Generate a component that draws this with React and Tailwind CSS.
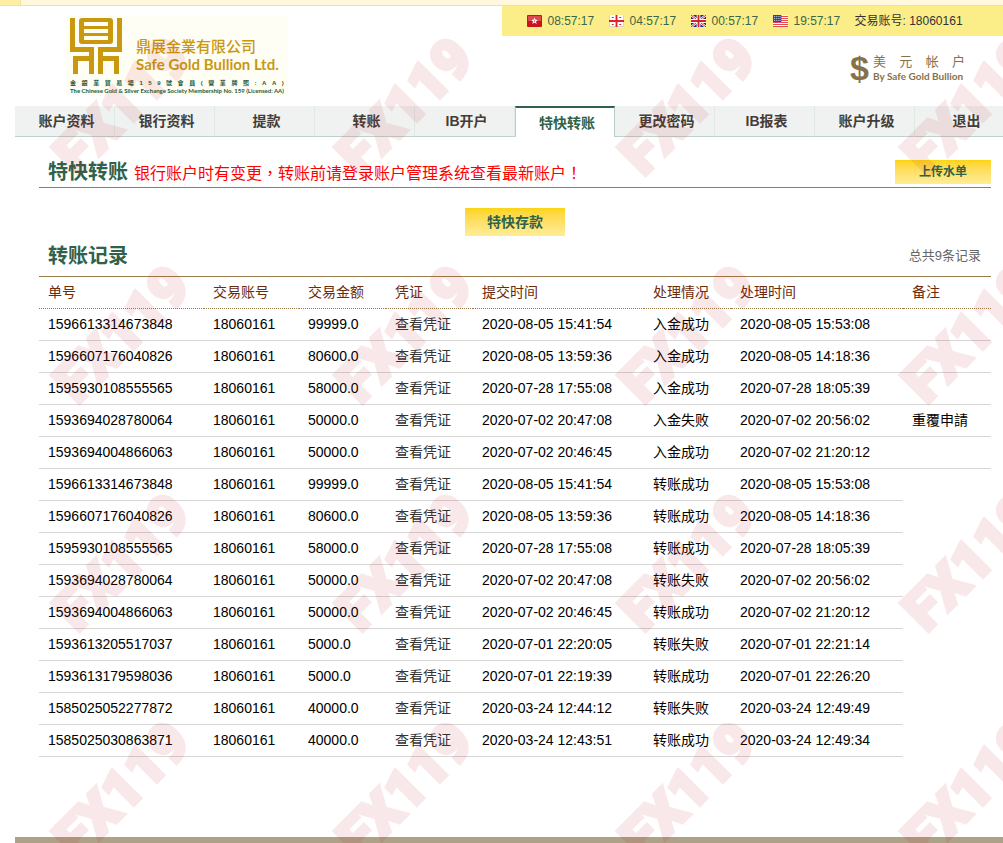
import React from "react";

const clocks = [
  ["hk", "08:57:17", "香港"],
  ["ge", "04:57:17", "格鲁吉亚"],
  ["gb", "00:57:17", "英国"],
  ["us", "19:57:17", "美国"],
];

const tabs = ["账户资料", "银行资料", "提款", "转账", "IB开户", "特快转账", "更改密码", "IB报表", "账户升级", "退出"];

const headers = ["单号", "交易账号", "交易金额", "凭证", "提交时间", "处理情况", "处理时间", "备注"];

const rows = [
  ["1596613314673848", "99999.0", "2020-08-05 15:41:54", "入金成功", "2020-08-05 15:53:08", ""],
  ["1596607176040826", "80600.0", "2020-08-05 13:59:36", "入金成功", "2020-08-05 14:18:36", ""],
  ["1595930108555565", "58000.0", "2020-07-28 17:55:08", "入金成功", "2020-07-28 18:05:39", ""],
  ["1593694028780064", "50000.0", "2020-07-02 20:47:08", "入金失败", "2020-07-02 20:56:02", "重覆申請"],
  ["1593694004866063", "50000.0", "2020-07-02 20:46:45", "入金成功", "2020-07-02 21:20:12", ""],
  ["1596613314673848", "99999.0", "2020-08-05 15:41:54", "转账成功", "2020-08-05 15:53:08"],
  ["1596607176040826", "80600.0", "2020-08-05 13:59:36", "转账成功", "2020-08-05 14:18:36"],
  ["1595930108555565", "58000.0", "2020-07-28 17:55:08", "转账成功", "2020-07-28 18:05:39"],
  ["1593694028780064", "50000.0", "2020-07-02 20:47:08", "转账失败", "2020-07-02 20:56:02"],
  ["1593694004866063", "50000.0", "2020-07-02 20:46:45", "转账成功", "2020-07-02 21:20:12"],
  ["1593613205517037", "5000.0", "2020-07-01 22:20:05", "转账失败", "2020-07-01 22:21:14"],
  ["1593613179598036", "5000.0", "2020-07-01 22:19:39", "转账成功", "2020-07-01 22:26:20"],
  ["1585025052277872", "40000.0", "2020-03-24 12:44:12", "转账失败", "2020-03-24 12:49:49"],
  ["1585025030863871", "40000.0", "2020-03-24 12:43:51", "转账成功", "2020-03-24 12:49:34"],
];

function Flag({ code }) {
  return (
    <svg width="15" height="12" viewBox="0 0 16 12" preserveAspectRatio="none" aria-hidden="true" className="shrink-0">
      {code === "hk" && (
        <>
          <rect width="16" height="12" rx="1" fill="#c8141c" />
          <rect x="1" y="1" width="14" height="5" fill="#e04a4e" />
          <path d="M8 2.5l1 2.3 2.5.1-1.9 1.6.7 2.5L8 7.6 5.7 9l.7-2.5L4.5 4.9 7 4.8z" fill="#fff" />
          <circle cx="8" cy="6" r=".7" fill="#d8303a" />
        </>
      )}
      {code === "ge" && (
        <>
          <rect width="16" height="12" rx="1" fill="#d9d3cd" />
          <rect x="1" y="0" width="14" height="11" fill="#fff" />
          <path d="M7 0h2v12H7zM0 5h16v2H0z" fill="#e0202c" />
          <path d="M3 2h2v1H3zM11 2h2v1h-2zM3 9h2v1H3zM11 9h2v1h-2z" fill="#e0202c" />
        </>
      )}
      {code === "gb" && (
        <>
          <rect width="16" height="12" rx="1" fill="#1d2f75" />
          <path d="M0 0l16 12M16 0L0 12" stroke="#fff" strokeWidth="2.4" />
          <path d="M0 0l16 12M16 0L0 12" stroke="#d8202c" strokeWidth="1" />
          <path d="M8 0v12M0 6h16" stroke="#fff" strokeWidth="4" />
          <path d="M8 0v12M0 6h16" stroke="#d8202c" strokeWidth="2" />
        </>
      )}
      {code === "us" && (
        <>
          <rect width="16" height="12" rx="1" fill="#fff" />
          <path d="M0 1.500h16M0 3.500h16M0 5.500h16M0 7.500h16M0 9.500h16M0 11.500h16" stroke="#e0444c" strokeWidth="1" />
          <rect width="9" height="7" fill="#3a3f94" />
          <path d="M1 1.500h8M1 3.500h8M1 5.500h8" stroke="#c9cbe6" strokeWidth="1" strokeDasharray="1 1" />
        </>
      )}
    </svg>
  );
}

function Logo() {
  return (
    <a href="#home" className="flex h-[79px] w-[222px] flex-col bg-[#fffef5] pt-0.5 pl-1">
      <span className="flex gap-3.5">
        <svg width="52" height="58" viewBox="0 0 52 58" aria-hidden="true" className="shrink-0" fill="#c9980f">
          <path d="M0 0h5v29h19v27h-5V43H8v13H3V38h16v-4H0z" />
          <path d="M52 0h-5v29H28v27h5V43h11v13h5V38H33v-4h19z" />
          <path fillRule="evenodd" d="M12 0h28a3 3 0 0 1 3 3v20a3 3 0 0 1-3 3H12a3 3 0 0 1-3-3V3a3 3 0 0 1 3-3zM14 4v4h24V4zM14 11v4h24v-4zM14 18v4h24v-4z" />
        </svg>
        <span className="flex flex-col pt-5 text-[#c9980f]">
          <span className="text-[15px] leading-[18px] font-medium whitespace-nowrap">鼎展金業有限公司</span>
          <span className="font-['Lato'] text-[15px] leading-4 font-bold whitespace-nowrap">Safe Gold Bullion Ltd.</span>
        </span>
      </span>
      <span className="mt-1 flex w-[214px] justify-between text-[6px] leading-[7px] font-bold text-[#1e5a3c]">
        {Array.from("金銀業貿易場159號會員(營業牌照:AA)").map((c, i) => (
          <span key={i}>{c}</span>
        ))}
      </span>
      <span className="font-['Lato'] text-[6px] leading-[7px] font-bold whitespace-nowrap text-[#1e5a3c]">
        The Chinese Gold &amp; Silver Exchange Society Membership No. 159 (Licensed: AA)
      </span>
    </a>
  );
}

function Watermark() {
  return (
    <div aria-hidden="true" className="pointer-events-none absolute inset-0 overflow-hidden opacity-9 select-none">
      <div className="-mt-2 -ml-5 grid w-[1132px] grid-cols-4">
        {Array.from({ length: 16 }, (_, i) => (
          <div key={i} className="flex h-[228px] items-center justify-center">
            <span className="-rotate-45 font-['Roboto'] text-[56px] leading-none font-black text-[#c8141c] [-webkit-text-stroke:4px_#c8141c]">FX119</span>
          </div>
        ))}
      </div>
    </div>
  );
}

export default function App() {
  return (
    <div className="relative flex min-h-screen flex-col overflow-hidden bg-white font-['Liberation_Sans','Noto_Sans_CJK_SC',sans-serif] text-sm text-black">
      <div className="flex h-1.5 border-b border-[#f5dfa0] bg-[#fff8dc]">
        <div className="w-[21px] border-r border-[#f5dfa0] bg-[#feefa5]" />
      </div>

      <header className="grid h-[100px] grid-cols-2">
        <div className="pt-2.5 pl-[66px]">
          <Logo />
        </div>
        <div className="flex flex-col">
          <div className="flex h-[30px] items-center bg-[#fbed88] pl-[25px] text-xs text-[#3d6647]">
            {clocks.map(([code, time, label]) => (
              <span key={code} aria-label={label} className="flex w-[82px] shrink-0 items-center gap-1.5">
                <Flag code={code} />
                {time}
              </span>
            ))}
            <span className="whitespace-nowrap text-[#333]">交易账号: 18060161</span>
          </div>
          <div className="flex items-center justify-end gap-1 pt-3 pr-[38px] text-[#86724a]">
            <span className="text-[34px] leading-10 font-bold">$</span>
            <span className="flex w-[92px] flex-col">
              <span className="flex justify-between text-[13px] leading-4">
                <span>美</span>
                <span>元</span>
                <span>帐</span>
                <span>户</span>
              </span>
              <span className="font-['Lato'] text-[10px] leading-3 font-bold whitespace-nowrap">By Safe Gold Bullion</span>
            </span>
          </div>
        </div>
      </header>

      <nav className="ml-[15px] flex h-[31px] font-bold">
        {tabs.map((t) =>
          t === "特快转账" ? (
            <a key={t} href="#express" aria-current="page" className="flex w-[100px] shrink-0 items-center justify-center border-x border-t-2 border-[#b9cfc6] border-t-[#2f6248] pl-1 text-[#2f6248]">
              {t}
            </a>
          ) : (
            <a key={t} href="#tab" className="flex w-[100px] shrink-0 items-center justify-center border-r border-b border-r-[#e0e9e6] border-b-[#bdd1ca] bg-[#eff2f1] pl-1 text-[#443c36]">
              {t}
            </a>
          )
        )}
      </nav>

      <main className="flex grow flex-col pr-3 pl-[39px]">
        <div className="flex h-[51px] items-end justify-between border-b border-[#9a7b50] pb-[3px] pl-[9px]">
          <div className="flex items-center gap-1.5">
            <h1 className="text-xl leading-6 font-bold text-[#2f6248]">特快转账</h1>
            <p className="font-['Noto_Sans_CJK_TC',sans-serif] text-base leading-6 text-[#f00]">银行账户时有变更，转账前请登录账户管理系统查看最新账户！</p>
          </div>
          <button type="button" className="h-6 w-24 bg-linear-to-b from-[#fdd40a] to-[#ffec96] text-xs font-bold text-[#2f6248]">
            上传水单
          </button>
        </div>

        <div className="flex justify-center pt-5">
          <button type="button" className="h-7 w-[100px] bg-linear-to-b from-[#fdd40a] to-[#ffec96] text-sm font-bold text-[#2f6248]">
            特快存款
          </button>
        </div>

        <div className="flex h-10 items-center justify-between pr-2.5 pl-[9px]">
          <h2 className="text-xl leading-6 font-bold text-[#2f6248]">转账记录</h2>
          <span className="text-[13px] leading-6 text-[#666]">总共9条记录</span>
        </div>

        <table className="w-full table-fixed border-separate border-spacing-0 border-t border-[#9a7b50] text-left">
          <colgroup>
            <col className="w-[165px]" />
            <col className="w-[95px]" />
            <col className="w-[87px]" />
            <col className="w-[87px]" />
            <col className="w-[171px]" />
            <col className="w-[87px]" />
            <col className="w-[172px]" />
            <col />
          </colgroup>
          <thead>
            <tr>
              {headers.map((h) => (
                <th key={h} className="h-8 border-b border-dotted border-[#9a7b50] pb-0.5 pl-[9px] font-normal text-[#6e2a08]">
                  {h}
                </th>
              ))}
            </tr>
          </thead>
          <tbody>
            {rows.map(([id, amount, sent, state, done, note], i) => (
              <tr key={i} className="[&>td]:h-8 [&>td]:border-b [&>td]:border-[#d6d6d6] [&>td]:pb-0.5 [&>td]:pl-[9px] [&>td]:whitespace-nowrap">
                <td>{id}</td>
                <td>18060161</td>
                <td>{amount}</td>
                <td>
                  <a href="#voucher" className="text-[#333]">查看凭证</a>
                </td>
                <td>{sent}</td>
                <td>{state}</td>
                <td>{done}</td>
                {note !== undefined && <td>{note}</td>}
              </tr>
            ))}
          </tbody>
        </table>
      </main>

      <footer className="mt-20 ml-[15px] h-1.5 bg-[#ada188]" />
      <Watermark />
    </div>
  );
}
